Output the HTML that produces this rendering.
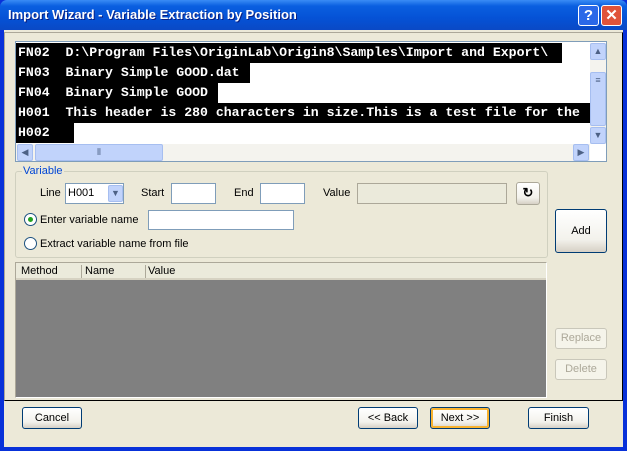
<!DOCTYPE html>
<html><head><style>
*{box-sizing:border-box;margin:0;padding:0}
body{width:627px;height:451px;overflow:hidden;font-family:Tahoma,"Liberation Sans",sans-serif;font-size:11px;background:#0831d9;position:relative}
.a{position:absolute}
.title{left:0;top:0;width:627px;height:30px;background:linear-gradient(#3a8cf5,#0a5fe0 20%,#0552d6 60%,#0a49c5);border-radius:7px 7px 0 0}
.tt{left:8px;top:7px;color:#fff;font-weight:bold;font-size:13px;text-shadow:1px 1px #0a1e80}
.tb{top:5px;width:21px;height:21px;border:1px solid #fff;border-radius:3px;color:#fff;font-weight:bold;font-size:15px;text-align:center;line-height:19px}
.client{left:4px;top:30px;width:619px;height:417px;background:#ece9d8}
.btn{border:1px solid #003c74;border-radius:3px;background:linear-gradient(#fff,#f3f2ec 70%,#d6d0c5);text-align:center;color:#000}
.dis{border-color:#c9c7ba;color:#aca899;background:#f5f4ea}
.edit{background:#fff;border:1px solid #7f9db9}
.mono{font-family:"Liberation Mono",monospace;font-weight:bold;font-size:13.2px;color:#fff;line-height:20px}
.ln{position:absolute;left:0;height:20px;background:#000;white-space:pre;padding-left:2px}
.sb{background:#c1d3fb;border:1px solid #a6bef0;border-radius:2px;color:#4d6185;text-align:center;font-size:9px;line-height:14px}
.rad{width:13px;height:13px;border:1px solid #1c5180;border-radius:50%;background:#fff}
</style></head><body>
<div class="a title"></div>
<div class="a tt">Import Wizard - Variable Extraction by Position</div>
<div class="a tb" style="left:578px;background:#2a68e8">?</div>
<div class="a tb" style="left:601px;background:#e0533a">✕</div>
<div class="a client"></div>
<div class="a" style="left:4px;top:32px;width:619px;height:369px;border:1px solid #000;border-top-color:#aca899;border-left-color:#aca899"></div>
<div class="a" style="left:15px;top:41px;width:592px;height:121px;border:1px solid #7f9db9;background:#fff"></div>
<div class="a mono" style="left:16px;top:43px;width:575px;height:100px;overflow:hidden">
<div class="ln" style="top:0;width:546px">FN02  D:\Program Files\OriginLab\Origin8\Samples\Import and Export\</div>
<div class="ln" style="top:20px;width:234px">FN03  Binary Simple GOOD.dat</div>
<div class="ln" style="top:40px;width:202px">FN04  Binary Simple GOOD</div>
<div class="ln" style="top:60px;width:575px">H001  This header is 280 characters in size.This is a test file for the</div>
<div class="ln" style="top:80px;width:58px">H002</div>
</div>
<div class="a" style="left:590px;top:43px;width:16px;height:101px;background:#f4f3ee"></div>
<div class="a sb" style="left:590px;top:43px;width:16px;height:17px">▲</div>
<div class="a sb" style="left:590px;top:72px;width:16px;height:54px">≡</div>
<div class="a sb" style="left:590px;top:127px;width:16px;height:17px">▼</div>
<div class="a" style="left:16px;top:144px;width:574px;height:17px;background:#f4f3ee"></div>
<div class="a sb" style="left:17px;top:144px;width:16px;height:17px">◀</div>
<div class="a sb" style="left:35px;top:144px;width:128px;height:17px">⦀</div>
<div class="a sb" style="left:573px;top:144px;width:16px;height:17px">▶</div>
<div class="a" style="left:15px;top:171px;width:533px;height:87px;border:1px solid #d0d0bf;border-radius:3px"></div>
<div class="a" style="left:22px;top:165px;background:#ece9d8;color:#0046d5;padding:0 1px">Variable</div>
<div class="a" style="left:40px;top:187px">Line</div>
<div class="a edit" style="left:65px;top:183px;width:59px;height:21px;padding:3px 2px">H001</div>
<div class="a sb" style="left:108px;top:185px;width:15px;height:17px">▼</div>
<div class="a" style="left:141px;top:187px">Start</div>
<div class="a edit" style="left:171px;top:183px;width:45px;height:21px"></div>
<div class="a" style="left:234px;top:187px">End</div>
<div class="a edit" style="left:260px;top:183px;width:45px;height:21px"></div>
<div class="a" style="left:323px;top:187px">Value</div>
<div class="a" style="left:357px;top:183px;width:150px;height:21px;border:1px solid #aca899;background:#ebeadb"></div>
<div class="a btn" style="left:516px;top:182px;width:24px;height:23px;border-color:#aca899;font-weight:bold;font-size:13px;line-height:20px">↻</div>
<div class="a rad" style="left:24px;top:213px"></div>
<div class="a" style="left:28px;top:217px;width:5px;height:5px;border-radius:50%;background:#21a121"></div>
<div class="a" style="left:40px;top:214px">Enter variable name</div>
<div class="a edit" style="left:148px;top:210px;width:146px;height:20px"></div>
<div class="a rad" style="left:24px;top:237px"></div>
<div class="a" style="left:40px;top:238px">Extract variable name from file</div>
<div class="a btn" style="left:555px;top:209px;width:52px;height:44px;line-height:42px">Add</div>
<div class="a" style="left:15px;top:262px;width:532px;height:136px;background:#808080;border:1px solid #aca899;border-right-color:#fff;border-bottom-color:#fff"></div>
<div class="a" style="left:16px;top:263px;width:530px;height:17px;background:#ebeadb;border-bottom:2px solid #d6d2c2"></div>
<div class="a" style="left:81px;top:265px;width:1px;height:13px;background:#aca899"></div>
<div class="a" style="left:145px;top:265px;width:1px;height:13px;background:#aca899"></div>
<div class="a" style="left:21px;top:265px">Method</div>
<div class="a" style="left:85px;top:265px">Name</div>
<div class="a" style="left:148px;top:265px">Value</div>
<div class="a btn dis" style="left:555px;top:328px;width:52px;height:21px;line-height:19px">Replace</div>
<div class="a btn dis" style="left:555px;top:359px;width:52px;height:21px;line-height:19px">Delete</div>
<div class="a btn" style="left:22px;top:407px;width:60px;height:22px;line-height:20px">Cancel</div>
<div class="a btn" style="left:358px;top:407px;width:60px;height:22px;line-height:20px">&lt;&lt; Back</div>
<div class="a btn" style="left:430px;top:407px;width:60px;height:22px;line-height:20px;box-shadow:inset 0 0 0 2px #f8b330">Next &gt;&gt;</div>
<div class="a btn" style="left:528px;top:407px;width:61px;height:22px;line-height:20px">Finish</div>
</body></html>
